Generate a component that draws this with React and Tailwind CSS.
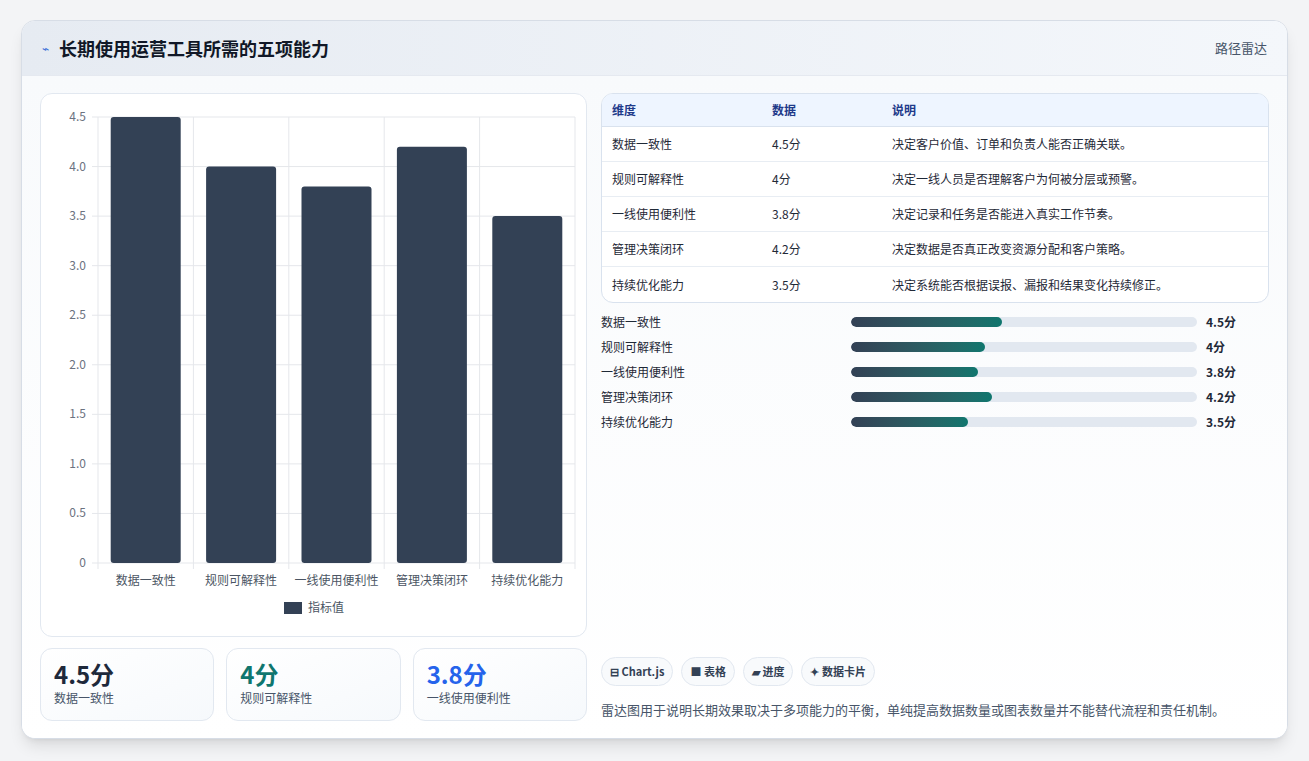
export default function App() {
  const data = [
    ["数据一致性", 4.5, "决定客户价值、订单和负责人能否正确关联。"],
    ["规则可解释性", 4, "决定一线人员是否理解客户为何被分层或预警。"],
    ["一线使用便利性", 3.8, "决定记录和任务是否能进入真实工作节奏。"],
    ["管理决策闭环", 4.2, "决定数据是否真正改变资源分配和客户策略。"],
    ["持续优化能力", 3.5, "决定系统能否根据误报、漏报和结果变化持续修正。"],
  ];
  const font = { fontFamily: '"Noto Sans CJK SC","Noto Sans",sans-serif' };
  const W = 546, H = 543;
  const x0 = 57, x1 = 534, y0 = 23, yb = 469;
  const ticks = [0, 0.5, 1, 1.5, 2, 2.5, 3, 3.5, 4, 4.5];
  const cw = (x1 - x0) / 5;
  return (
    <div className="w-[1309px] h-[761px] bg-[#f3f4f6] pt-[20px] px-[21px]" style={font}>
      <div className="w-[1267px] h-[719px] bg-white rounded-[14px] border border-[#d7dde6] shadow-lg overflow-hidden flex flex-col">
        <div className="h-[55px] shrink-0 bg-gradient-to-r from-[#e6ebf2] to-[#f4f7fb] border-b border-[#e5e9f0] flex items-center justify-between px-[20px]">
          <div className="flex items-center gap-[10px]">
            <span className="text-[#3b6fd8] text-[12px]">⌁</span>
            <span className="text-[18px] font-bold text-[#111827]">长期使用运营工具所需的五项能力</span>
          </div>
          <span className="text-[13px] text-[#475569]">路径雷达</span>
        </div>
        <div className="flex-1 bg-gradient-to-b from-[#f8fafc] to-white px-[18px] pt-[17px] flex gap-[14px]">
          <div className="w-[547px] flex flex-col gap-[11px]">
            <div className="h-[544px] rounded-[12px] border border-[#e2e8f0] bg-white">
              <svg width={W} height={H} className="block">
                {ticks.map((t) => {
                  const y = yb - (t / 4.5) * (yb - y0);
                  return (
                    <g key={t}>
                      <line x1={x0 - 6} x2={x1} y1={y} y2={y} stroke="#e5e7eb" />
                      <text x={x0 - 12} y={y + 4} textAnchor="end" fontSize="12" fill="#6b7280" style={font}>{t === 0 ? "0" : t.toFixed(1)}</text>
                    </g>
                  );
                })}
                {[0, 1, 2, 3, 4, 5].map((i) => (
                  <line key={i} x1={x0 + i * cw} x2={x0 + i * cw} y1={y0} y2={yb + 6} stroke="#e5e7eb" />
                ))}
                {data.map((d, i) => {
                  const h = (d[1] / 4.5) * (yb - y0);
                  const cx = x0 + cw * i + cw / 2;
                  return (
                    <g key={i}>
                      <rect x={cx - 35} y={yb - h} width="70" height={h} rx="3" fill="#334155" />
                      <text x={cx} y={yb + 22} textAnchor="middle" fontSize="12" fill="#4b5563" style={font}>{d[0]}</text>
                    </g>
                  );
                })}
                <rect x="243" y="508" width="18" height="12" fill="#334155" />
                <text x="267" y="518" fontSize="12" fill="#4b5563" style={font}>指标值</text>
              </svg>
            </div>
            <div className="flex gap-[12px]">
              {[["4.5分", "数据一致性", "text-[#1e293b]"], ["4分", "规则可解释性", "text-[#0f766e]"], ["3.8分", "一线使用便利性", "text-[#2563eb]"]].map((c) => (
                <div key={c[1]} className="w-[175px] h-[73px] rounded-[12px] border border-[#e2e8f0] bg-gradient-to-br from-white to-[#f6f9fc] px-[13px] pt-[9px]">
                  <div className={`text-[24px] font-bold leading-[32px] ${c[2]}`}>{c[0]}</div>
                  <div className="text-[12px] text-[#475569] leading-[16px]">{c[1]}</div>
                </div>
              ))}
            </div>
          </div>
          <div className="flex-1 flex flex-col">
            <div className="rounded-[12px] border border-[#d9e2ee] overflow-hidden bg-white">
              <div className="h-[33px] bg-[#eef5ff] border-b border-[#d9e2ee] flex items-center text-[12px] font-bold text-[#1e3a8a] px-[10px]">
                <div className="w-[160px]">维度</div>
                <div className="w-[120px]">数据</div>
                <div>说明</div>
              </div>
              {data.map((d, i) => (
                <div key={i} className={`h-[35px] flex items-center text-[12px] text-[#1f2937] px-[10px] ${i < 4 ? "border-b border-[#e8edf3]" : ""}`}>
                  <div className="w-[160px]">{d[0]}</div>
                  <div className="w-[120px]">{d[1]}分</div>
                  <div>{d[2]}</div>
                </div>
              ))}
            </div>
            <div className="mt-[11px] flex flex-col gap-[9px]">
              {data.map((d, i) => (
                <div key={i} className="h-[16px] flex items-center text-[12px] text-[#1f2937]">
                  <div className="w-[250px]">{d[0]}</div>
                  <div className="w-[346px] h-[10px] rounded-full bg-[#e2e8f0] overflow-hidden">
                    <div className="h-full rounded-full bg-gradient-to-r from-[#334155] to-[#0f766e]" style={{ width: `${(d[1] / 10.33) * 100}%` }} />
                  </div>
                  <div className="ml-[9px] font-bold">{d[1]}分</div>
                </div>
              ))}
            </div>
            <div className="flex-1" />
            <div className="flex gap-[8px] mb-[14px]">
              {["⊟ Chart.js", "■ 表格", "▰ 进度", "✦ 数据卡片"].map((t) => (
                <span key={t} className="h-[29px] px-[8px] rounded-full border border-[#e2e8f0] bg-[#f8fafc] text-[11px] font-bold text-[#334155] flex items-center">{t}</span>
              ))}
            </div>
            <div className="text-[13px] text-[#475569] mb-[19px]">雷达图用于说明长期效果取决于多项能力的平衡，单纯提高数据数量或图表数量并不能替代流程和责任机制。</div>
          </div>
        </div>
      </div>
    </div>
  );
}
